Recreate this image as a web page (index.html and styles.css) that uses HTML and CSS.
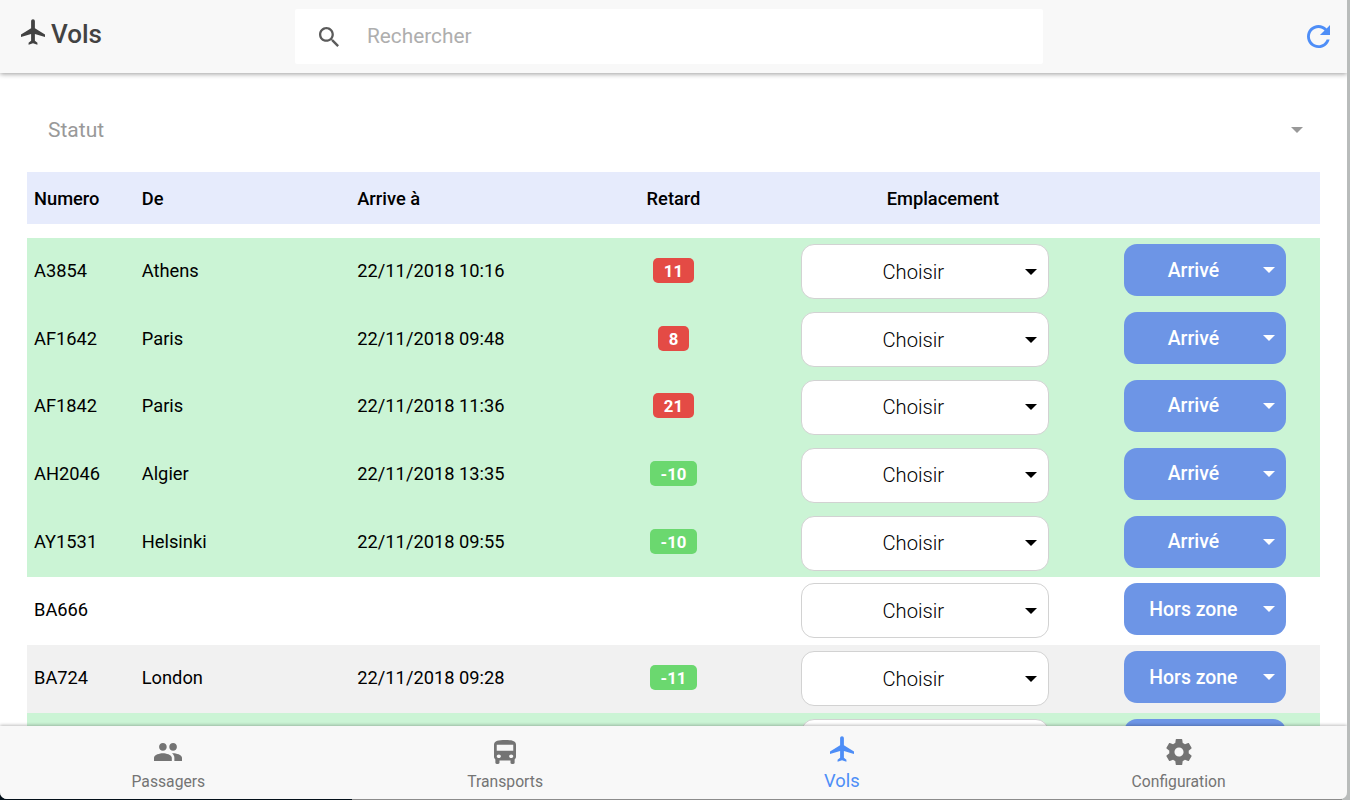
FILE: index.html
```html
<!DOCTYPE html>
<html lang="fr">
<head>
    <meta charset="UTF-8">
    <meta name="viewport" content="width=device-width, initial-scale=1.0">
    <title>Vols</title>
    <link rel="stylesheet" href="styles.css">
</head>
<body>
    <!-- shared icons -->
    <svg class="icons">
        <symbol id="plane" viewBox="2 2 19 20"><path d="M21 16v-2l-8-5V3.5c0-.83-.67-1.5-1.5-1.5S10 2.67 10 3.5V9l-8 5v2l8-2.5V19l-2 1.5V22l3.5-1 3.5 1v-1.5L13 19v-5.5l8 2.5z"/></symbol>
    </svg>

    <div class="app">
        <header class="header">
            <h1 class="title"><svg class="title-icon"><use href="#plane"/></svg>Vols</h1>
            <div class="searchbar">
                <svg class="search-icon" viewBox="3 3 17.5 17.5"><path d="M15.5 14h-.79l-.28-.27C15.41 12.59 16 11.11 16 9.5 16 5.91 13.09 3 9.5 3S3 5.91 3 9.5 5.91 16 9.5 16c1.61 0 3.09-.59 4.23-1.57l.27.28v.79l5 4.99L20.49 19l-4.99-5zm-6 0C7.01 14 5 11.99 5 9.5S7.01 5 9.5 5 14 7.01 14 9.5 11.99 14 9.5 14z"/></svg>
                <input type="text" class="search-input" placeholder="Rechercher">
            </div>
            <svg class="refresh" viewBox="4 4 16 16"><path d="M17.65 6.35C16.2 4.9 14.21 4 12 4c-4.42 0-7.99 3.58-7.99 8s3.57 8 7.99 8c3.73 0 6.84-2.55 7.73-6h-2.08c-.82 2.33-3.04 4-5.65 4-3.31 0-6-2.69-6-6s2.69-6 6-6c1.66 0 3.14.69 4.22 1.78L13 11h7V4l-2.35 2.35z"/></svg>
        </header>

        <main class="content">
            <div class="filter"><span>Statut</span><i class="arrow"></i></div>

            <div class="row head">
                <div>Numero</div>
                <div>De</div>
                <div>Arrive à</div>
                <div class="center">Retard</div>
                <div class="center">Emplacement</div>
                <div></div>
            </div>

            <div class="row green">
                <div>A3854</div>
                <div>Athens</div>
                <div>22/11/2018 10:16</div>
                <div class="center"><span class="badge late">11</span></div>
                <div class="place"><div class="select"><span>Choisir</span><i class="arrow"></i></div></div>
                <div class="state"><div class="button"><span>Arrivé</span><i class="arrow"></i></div></div>
            </div>
            <div class="row green">
                <div>AF1642</div>
                <div>Paris</div>
                <div>22/11/2018 09:48</div>
                <div class="center"><span class="badge late">8</span></div>
                <div class="place"><div class="select"><span>Choisir</span><i class="arrow"></i></div></div>
                <div class="state"><div class="button"><span>Arrivé</span><i class="arrow"></i></div></div>
            </div>
            <div class="row green">
                <div>AF1842</div>
                <div>Paris</div>
                <div>22/11/2018 11:36</div>
                <div class="center"><span class="badge late">21</span></div>
                <div class="place"><div class="select"><span>Choisir</span><i class="arrow"></i></div></div>
                <div class="state"><div class="button"><span>Arrivé</span><i class="arrow"></i></div></div>
            </div>
            <div class="row green">
                <div>AH2046</div>
                <div>Algier</div>
                <div>22/11/2018 13:35</div>
                <div class="center"><span class="badge early">-10</span></div>
                <div class="place"><div class="select"><span>Choisir</span><i class="arrow"></i></div></div>
                <div class="state"><div class="button"><span>Arrivé</span><i class="arrow"></i></div></div>
            </div>
            <div class="row green">
                <div>AY1531</div>
                <div>Helsinki</div>
                <div>22/11/2018 09:55</div>
                <div class="center"><span class="badge early">-10</span></div>
                <div class="place"><div class="select"><span>Choisir</span><i class="arrow"></i></div></div>
                <div class="state"><div class="button"><span>Arrivé</span><i class="arrow"></i></div></div>
            </div>
            <div class="row">
                <div>BA666</div>
                <div></div>
                <div></div>
                <div></div>
                <div class="place"><div class="select"><span>Choisir</span><i class="arrow"></i></div></div>
                <div class="state"><div class="button"><span>Hors zone</span><i class="arrow"></i></div></div>
            </div>
            <div class="row grey">
                <div>BA724</div>
                <div>London</div>
                <div>22/11/2018 09:28</div>
                <div class="center"><span class="badge early">-11</span></div>
                <div class="place"><div class="select"><span>Choisir</span><i class="arrow"></i></div></div>
                <div class="state"><div class="button"><span>Hors zone</span><i class="arrow"></i></div></div>
            </div>
            <div class="row green">
                <div></div>
                <div></div>
                <div></div>
                <div></div>
                <div class="place"><div class="select"></div></div>
                <div class="state"><div class="button"></div></div>
            </div>
        </main>

        <nav class="tabs">
            <a class="tab">
                <svg class="tab-people" viewBox="1 5 22 14"><path d="M16 11c1.66 0 2.99-1.34 2.99-3S17.66 5 16 5s-3 1.34-3 3 1.34 3 3 3zm-8 0c1.66 0 2.99-1.34 2.99-3S9.66 5 8 5 5 6.34 5 8s1.34 3 3 3zm0 2c-2.33 0-7 1.17-7 3.5V19h14v-2.5c0-2.33-4.67-3.5-7-3.5zm8 0c-.29 0-.62.02-.97.05 1.16.84 1.97 1.97 1.97 3.45V19h6v-2.5c0-2.33-4.67-3.5-7-3.5z"/></svg>
                <span>Passagers</span>
            </a>
            <a class="tab">
                <svg class="tab-bus" viewBox="4 2 16 20" preserveAspectRatio="none"><path d="M4 16c0 .88.39 1.67 1 2.22V21c0 .55.45 1 1 1h1c.55 0 1-.45 1-1v-2h8v2c0 .55.45 1 1 1h1c.55 0 1-.45 1-1v-2.78c.61-.55 1-1.34 1-2.22V6c0-3.5-3.58-4-8-4s-8 .5-8 4v10zm3.500 1c-.83 0-1.500-.67-1.500-1.500S6.670 14 7.500 14s1.500.67 1.500 1.500S8.330 17 7.500 17zm9 0c-.83 0-1.500-.67-1.500-1.500s.67-1.500 1.500-1.500 1.500.67 1.500 1.500-.67 1.500-1.500 1.500zm1.500-6H6V6h12v5z"/></svg>
                <span>Transports</span>
            </a>
            <a class="tab active">
                <svg class="tab-plane"><use href="#plane"/></svg>
                <span>Vols</span>
            </a>
            <a class="tab">
                <svg class="tab-gear" viewBox="2.2 2 19.6 20"><path d="M19.430 12.980c.04-.32.07-.64.07-.98s-.03-.66-.07-.98l2.110-1.650c.19-.15.24-.42.12-.64l-2-3.460c-.12-.22-.39-.3-.61-.22l-2.490 1c-.52-.4-1.080-.73-1.690-.98l-.38-2.650C14.460 2.180 14.250 2 14 2h-4c-.25 0-.46.18-.49.42l-.38 2.650c-.61.25-1.170.59-1.690.98l-2.490-1c-.23-.09-.49 0-.61.22l-2 3.460c-.13.22-.07.49.12.64l2.110 1.650c-.04.32-.07.65-.07.98s.03.66.07.98l-2.110 1.650c-.19.15-.24.42-.12.64l2 3.460c.12.22.39.3.61.22l2.490-1c.52.4 1.080.73 1.690.98l.38 2.650c.03.24.24.42.49.42h4c.25 0 .46-.18.49-.42l.38-2.650c.61-.25 1.170-.59 1.690-.98l2.490 1c.23.09.49 0 .61-.22l2-3.460c.12-.22.07-.49-.12-.64l-2.110-1.650zM12 15.500c-1.930 0-3.500-1.570-3.500-3.500s1.570-3.500 3.500-3.500 3.500 1.570 3.500 3.500-1.570 3.500-3.500 3.500z"/></svg>
                <span>Configuration</span>
            </a>
        </nav>
    </div>
</body>
</html>
```
FILE: styles.css
```css
* {
    box-sizing: border-box;
}

body {
    margin: 0;
    height: 800px;
    overflow: hidden;
    padding-right: 3px;
    background: linear-gradient(to right, #04101a 352px, #8c8c8c 352px, #8c8c8c 1342px, #b9bcbb 1342px);
    font-family: Roboto, "Liberation Sans", sans-serif;
    font-size: 18.3px;
    color: #000;
}

svg {
    fill: currentColor;
    flex: none;
}

.icons {
    display: none;
}

.app {
    display: flex;
    flex-direction: column;
    height: 798.5px;
    overflow: hidden;
    background-color: #fff;
    border-radius: 0 0 7px 7px;
}

.header {
    display: flex;
    align-items: center;
    flex: none;
    height: 73px;
    padding: 0 17px 0 21px;
    background-color: #f8f8f8;
    box-shadow: 0 1px 5px rgba(0, 0, 0, 0.4);
    z-index: 1;
}

.title {
    display: flex;
    align-items: center;
    width: 274px;
    margin: 0;
    padding-bottom: 5px;
    font-size: 26px;
    font-weight: 500;
    color: #424242;
}

.title-icon {
    width: 24px;
    height: 26px;
    margin: 0 6px 5px 0;
}

.searchbar {
    display: flex;
    align-items: center;
    width: 748px;
    height: 55px;
    padding-left: 24px;
    background-color: #fff;
    border-radius: 2px;
}

.search-icon {
    width: 20px;
    height: 20px;
    color: #5b5b5b;
}

.search-input {
    flex: 1;
    margin-left: 28px;
    padding: 0 0 2px;
    border: none;
    outline: none;
    font-family: inherit;
    font-size: 20.8px;
}

.search-input::placeholder {
    color: #aeaeae;
}

.refresh {
    width: 23px;
    height: 23px;
    margin-left: auto;
    margin-bottom: 1px;
    color: #4e8ef7;
}

.content {
    flex: 1;
    min-height: 0;
    overflow: hidden;
    padding: 0 27px;
}

.filter {
    display: flex;
    align-items: center;
    justify-content: space-between;
    height: 99.4px;
    padding: 15px 17px 0 21px;
    font-size: 21px;
    color: #999;
}

.arrow {
    flex: none;
    border: 6.5px solid transparent;
    border-top-color: currentColor;
    border-bottom: none;
}

.row {
    display: grid;
    grid-template-columns: 1fr 2fr 2fr 2fr 3fr 2fr;
    height: 67.85px;
}

.row > div {
    min-width: 0;
    padding: 0 7px;
    line-height: 66.5px;
}

.row.head {
    height: 52px;
    margin-bottom: 13.3px;
    background-color: #e6ebfc;
    font-weight: 500;
}

.row.head > div {
    line-height: 54px;
}

.green {
    background-color: #cbf4d5;
}

.grey {
    background-color: #f1f1f1;
}

.center {
    text-align: center;
}

.badge {
    display: inline-block;
    height: 25px;
    padding: 0 10.5px;
    border-radius: 5px;
    font-size: 16.8px;
    font-weight: 700;
    line-height: 26px;
    color: #fff;
}

.late {
    background-color: #e44b45;
}

.early {
    background-color: #6bd86f;
}

.select,
.button {
    display: flex;
    align-items: center;
    line-height: normal;
}

.select span,
.button span {
    flex: 1;
    text-align: center;
}

.row > .place {
    padding: 6.5px 0 0 19.5px;
}

.select {
    width: 248px;
    height: 55px;
    padding: 0 11px 0 0;
    background-color: #fff;
    border: 1.5px solid #d2d2d2;
    border-radius: 13px;
    font-size: 20.2px;
    font-weight: 300;
}

.row > .state {
    padding: 6.5px 0 0 19.4px;
}

.button {
    width: 162px;
    height: 52px;
    padding: 0 11px 0 0;
    background-color: #6d95e6;
    border-radius: 13px;
    font-size: 19.4px;
    font-weight: 500;
    color: #fff;
}

.tabs {
    display: flex;
    flex: none;
    height: 73px;
    background-color: #f8f8f8;
    box-shadow: 0 -1px 3px rgba(0, 0, 0, 0.25);
    z-index: 1;
}

.tab {
    display: flex;
    flex-direction: column;
    align-items: center;
    justify-content: flex-end;
    flex: 1;
    padding-bottom: 7px;
    font-size: 15.7px;
    line-height: 20px;
    color: #747474;
}

.tab.active {
    padding-bottom: 8px;
    font-size: 18.3px;
    color: #4e8ef7;
}

.tab-people {
    width: 28px;
    height: 18px;
    margin-bottom: 11px;
}

.tab-bus {
    width: 22px;
    height: 24px;
    margin-bottom: 8px;
}

.tab-plane {
    width: 24px;
    height: 26px;
    margin-bottom: 9px;
}

.tab-gear {
    width: 26px;
    height: 26px;
    margin-bottom: 7px;
}
```
